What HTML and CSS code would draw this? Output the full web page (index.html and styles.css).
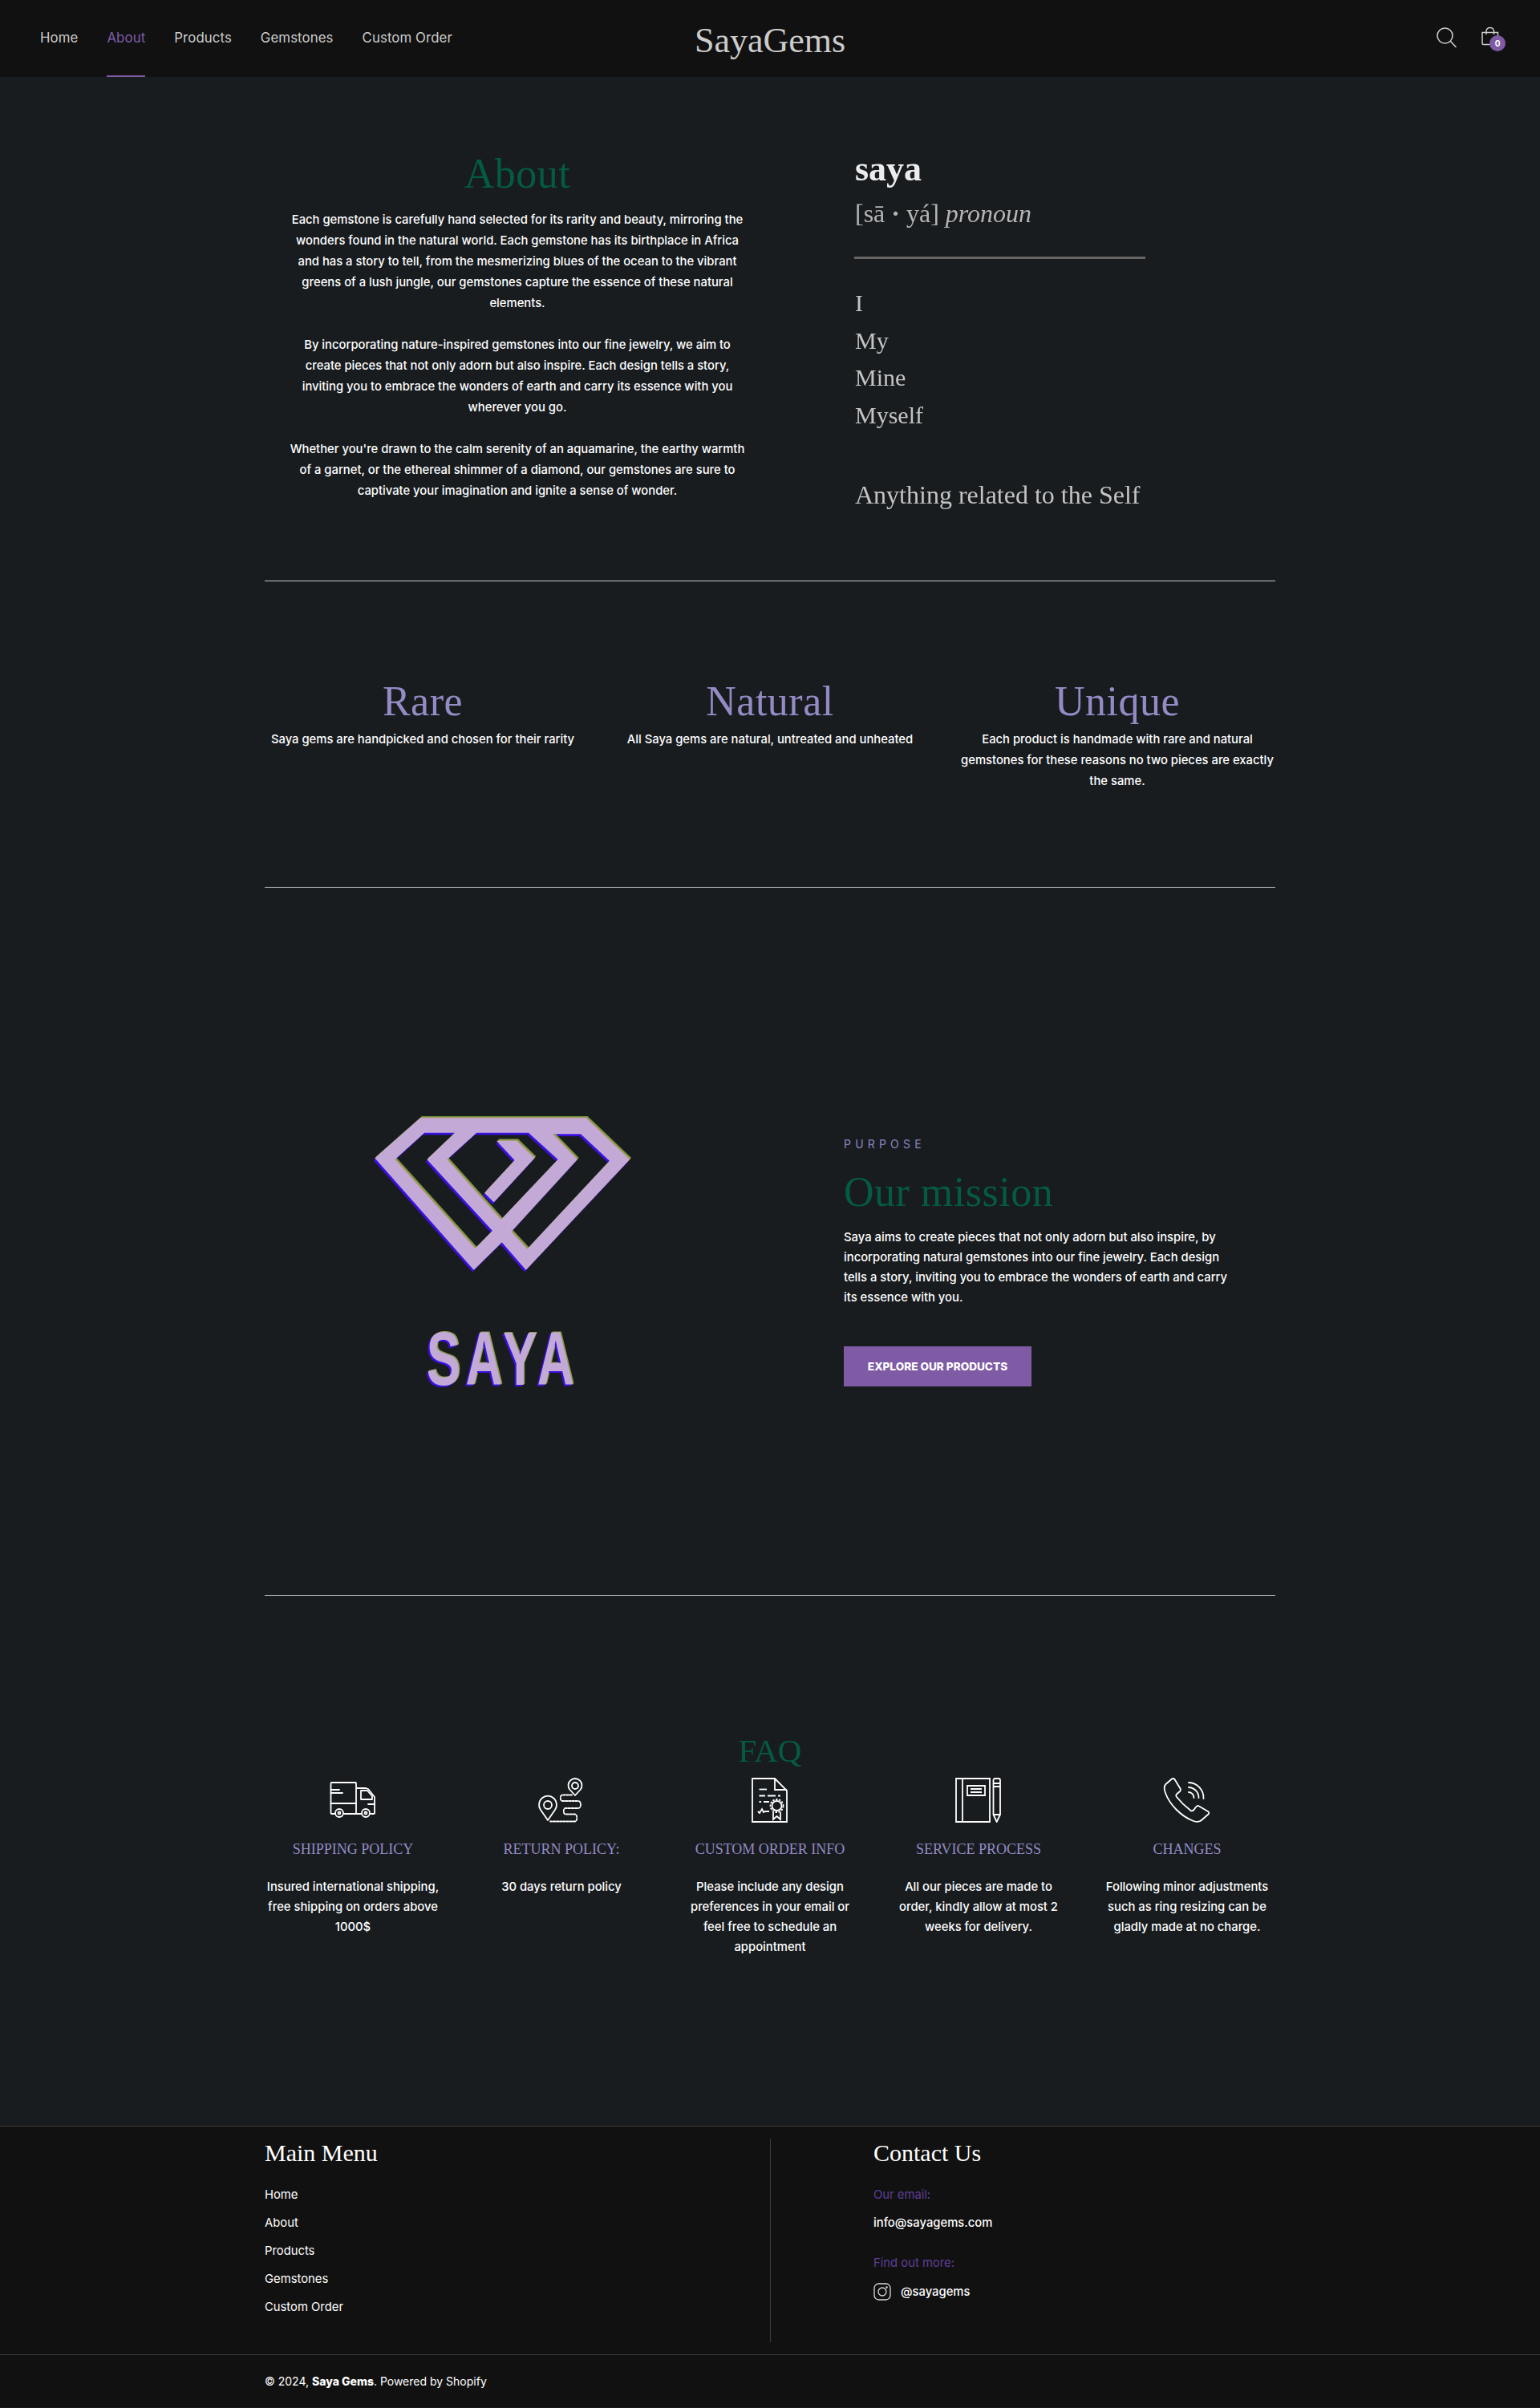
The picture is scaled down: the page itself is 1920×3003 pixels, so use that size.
FILE: index.html
```html
<!DOCTYPE html>
<html lang="en">
<head>
<meta charset="utf-8">
<title>About - SayaGems</title>
<link rel="stylesheet" href="styles.css">
</head>
<body>
<header class="site-header">
  <nav class="nav">
    <a href="#">Home</a>
    <a href="#" class="active">About</a>
    <a href="#">Products</a>
    <a href="#">Gemstones</a>
    <a href="#">Custom Order</a>
  </nav>
  <a href="#" class="brand">SayaGems</a>
  <div class="tools">
    <svg class="ico-search" width="28" height="28" viewBox="0 0 28 28" fill="none" stroke="#ccc" stroke-width="1.6"><circle cx="11.5" cy="11.5" r="9.5"/><path d="M18.5 18.5l7 7.5"/></svg>
    <div class="cart">
      <svg width="24" height="24" viewBox="0 0 24 24" fill="none" stroke="#ccc" stroke-width="1.5"><path d="M2 7.500h19.500v13.500a1.500 1.500 0 0 1-1.500 1.500H3.500A1.500 1.500 0 0 1 2 21z"/><path d="M7 10V5.500a4.800 4.800 0 0 1 9.500 0V10"/></svg>
      <span class="badge">0</span>
    </div>
  </div>
</header>

<main class="wrap">
  <section class="about">
    <div class="about-left">
      <h1 class="h-green h-large">About</h1>
      <p>Each gemstone is carefully hand selected for its rarity and beauty, mirroring the<br>wonders found in the natural world. Each gemstone has its birthplace in Africa<br>and has a story to tell, from the mesmerizing blues of the ocean to the vibrant<br>greens of a lush jungle, our gemstones capture the essence of these natural<br>elements.</p>
      <p>By incorporating nature-inspired gemstones into our fine jewelry, we aim to<br>create pieces that not only adorn but also inspire. Each design tells a story,<br>inviting you to embrace the wonders of earth and carry its essence with you<br>wherever you go.</p>
      <p>Whether you're drawn to the calm serenity of an aquamarine, the earthy warmth<br>of a garnet, or the ethereal shimmer of a diamond, our gemstones are sure to<br>captivate your imagination and ignite a sense of wonder.</p>
    </div>
    <div class="about-right">
      <div class="def-word">saya</div>
      <div class="def-pron">[sā <b>·</b> yá] <em>pronoun</em></div>
      <div class="def-rule"></div>
      <ul class="def-list"><li>I</li><li>My</li><li>Mine</li><li>Myself</li></ul>
      <div class="def-note">Anything related to the Self</div>
    </div>
  </section>

  <section class="traits">
    <div class="trait"><h2 class="h-purple h-large">Rare</h2><p>Saya gems are handpicked and chosen for their rarity</p></div>
    <div class="trait"><h2 class="h-purple h-large">Natural</h2><p>All Saya gems are natural, untreated and unheated</p></div>
    <div class="trait"><h2 class="h-purple h-large">Unique</h2><p>Each product is handmade with rare and natural<br>gemstones for these reasons no two pieces are exactly<br>the same.</p></div>
  </section>

  <section class="mission">
    <div class="mission-logo">
      <svg class="gem" width="340" height="230" viewBox="0 0 1020 690">
        <defs>
          <path id="gemshape" fill-rule="evenodd" d="M195 40H815L978 195 590 608 500 505 395 608 25 190ZM210 95H325L220 195 465 462 400 528 100 195ZM405 95H600L710 195 497 420 295 195ZM690 100H795L903 200 595 530 535 465 782 195ZM480 125H555L622 190 470 355 435 320 548 198Z"/>
        </defs>
        <use href="#gemshape" class="gem-blue" x="-5" y="8"/>
        <use href="#gemshape" class="gem-green" x="6" y="-7"/>
        <use href="#gemshape" class="gem-orange" x="3" y="-3"/>
        <use href="#gemshape" class="gem-main"/>
      </svg>
      <div class="saya-mark">SAYA</div>
    </div>
    <div class="mission-text">
      <div class="eyebrow">PURPOSE</div>
      <h2 class="h-green h-large">Our mission</h2>
      <p>Saya aims to create pieces that not only adorn but also inspire, by<br>incorporating natural gemstones into our fine jewelry. Each design<br>tells a story, inviting you to embrace the wonders of earth and carry<br>its essence with you.</p>
      <a href="#" class="btn">EXPLORE OUR PRODUCTS</a>
    </div>
  </section>

  <section class="faq">
    <h2 class="faq-title">FAQ</h2>
    <div class="faq-grid">
      <div class="faq-item">
        <svg class="ico" viewBox="0 0 60 56" fill="none" stroke="#fff" stroke-width="1.800" stroke-linejoin="round" stroke-linecap="round">
          <path d="M8 45H3.500a1 1 0 0 1-1-1V7a1 1 0 0 1 1-1H33a1 1 0 0 1 1 1v38H19M34 13h12l3 1 8 10v20a1 1 0 0 1-1 1h-4M41 45h-7"/>
          <path d="M2.500 32H34M2.500 15H13M2.500 19H17M40 16h8l6 7v4H40zM49 33h8"/>
          <circle cx="13" cy="44" r="5"/><circle cx="13" cy="44" r="1.500"/><circle cx="46" cy="44" r="5"/><circle cx="46" cy="44" r="1.500"/>
        </svg>
        <h3>SHIPPING POLICY</h3>
        <p>Insured international shipping,<br>free shipping on orders above<br>1000$</p>
      </div>
      <div class="faq-item">
        <svg class="ico" viewBox="0 0 60 56" fill="none" stroke="#fff" stroke-width="1.800" stroke-linejoin="round">
          <path d="M13 53 4 40a11 11 0 1 1 18 0z"/><circle cx="13" cy="34" r="5"/>
          <path d="M47 22l-6.500-7a8.500 8.500 0 1 1 13 0z"/><circle cx="47" cy="10" r="4"/>
          <path stroke-dasharray="2.600 1.600" stroke-linecap="round" d="M43 21.500H31c-3 0-3 7.500 0 7.500H51c4 0 4 9 0 9H35c-3 0-3 7.500 0 7.500H47c3 0 3 9 0 9H16"/>
        </svg>
        <h3>RETURN POLICY:</h3>
        <p>30 days return policy</p>
      </div>
      <div class="faq-item">
        <svg class="ico" viewBox="0 0 60 56" fill="none" stroke="#fff" stroke-width="1.800" stroke-linejoin="miter">
          <path d="M8 1H36L51 16V55H8z"/><path d="M36 1V15H51"/>
          <path d="M16.500 14.500H26"/>
          <path d="M16.500 22.500H24M27 22.500H37M40 22.500H43M16.500 30H19M22 30H29"/>
          <circle cx="38.500" cy="35" r="6"/><circle cx="38.500" cy="35" r="8" stroke-dasharray="2.500 1.500"/>
          <path d="M34 43V52L38.500 48 43 52V43"/>
          <path d="M15 42l2 2 3-5 2 4 2-1h5"/>
        </svg>
        <h3>CUSTOM ORDER INFO</h3>
        <p>Please include any design<br>preferences in your email or<br>feel free to schedule an<br>appointment</p>
      </div>
      <div class="faq-item">
        <svg class="ico" viewBox="0 0 60 56" fill="none" stroke="#fff" stroke-width="1.800">
          <path d="M2 1H44V55H2zM10 1V55"/>
          <path d="M16 10H38V22H16zM20 14H34M20 18H34"/>
          <path d="M48.500 45V3a2 2 0 0 1 2-2h4.500a2 2 0 0 1 2 2V46l-4.300 9-4.200-9zM48.500 7H57M48.500 11H57M48.500 46H57"/>
        </svg>
        <h3>SERVICE PROCESS</h3>
        <p>All our pieces are made to<br>order, kindly allow at most 2<br>weeks for delivery.</p>
      </div>
      <div class="faq-item">
        <svg class="ico" viewBox="0 0 60 56" fill="none" stroke="#fff" stroke-width="1.800" stroke-linejoin="round" stroke-linecap="round">
          <path d="M11 1.500 3.500 8C.5 11 1.500 15 3 19 8 33 22 48 38 54c4 1.500 8 1 10.500-1.500l8-7c1-1 1-2.500-.5-3.500L45 35.500c-1.500-1-3-.5-4 1l-2.500 3.500c-1.500 1.500-3 2-4.500.5C28 36 21 29 17 24c-1-1.500-1-3 .5-4l3.500-3c1-1 1-2.500.5-3.500L14.500 2C13.500 1 12 .8 11 1.500z"/>
          <path d="M32 18a7 7 0 0 1 6.500 7M32 12a13 13 0 0 1 12.500 13M32 6a19 19 0 0 1 18.500 20"/>
        </svg>
        <h3>CHANGES</h3>
        <p>Following minor adjustments<br>such as ring resizing can be<br>gladly made at no charge.</p>
      </div>
    </div>
  </section>
</main>

<footer class="site-footer">
  <div class="footer-main">
    <div class="footer-col">
      <h4>Main Menu</h4>
      <ul class="footer-links">
        <li><a href="#">Home</a></li>
        <li><a href="#">About</a></li>
        <li><a href="#">Products</a></li>
        <li><a href="#">Gemstones</a></li>
        <li><a href="#">Custom Order</a></li>
      </ul>
    </div>
    <div class="footer-col contact">
      <h4>Contact Us</h4>
      <div class="f-label">Our email:</div>
      <div class="f-line">info@sayagems.com</div>
      <div class="f-label second">Find out more:</div>
      <div class="f-insta">
        <svg width="22" height="22" viewBox="0 0 22 22" fill="none" stroke="#ddd" stroke-width="1.300"><rect x="1" y="1" width="20" height="20" rx="5.500"/><circle cx="11" cy="11" r="5"/><circle cx="16.500" cy="5.500" r=".6" fill="#ddd"/></svg>
        <span>@sayagems</span>
      </div>
    </div>
  </div>
  <div class="footer-bar">
    <div class="footer-copy">© 2024, <strong>Saya Gems</strong>. Powered by Shopify</div>
  </div>
</footer>
</body>
</html>
```
FILE: styles.css
```css
* { box-sizing: border-box; }
html, body { margin: 0; padding: 0; }
body {
  background: #181c1f;
  color: #fff;
  font-family: Inter, "Liberation Sans", sans-serif;
  font-size: 14.800px;
  font-weight: 500;
}
a { color: inherit; text-decoration: none; }
h1, h2, h3, h4, p, ul { margin: 0; padding: 0; font-weight: 400; }
p { font-weight: 500; }
ul { list-style: none; }

.site-header {
  height: 96px;
  background: #111;
  position: relative;
  display: flex;
  align-items: center;
  justify-content: space-between;
  padding: 0 48px 0 50px;
}
.nav { display: flex; gap: 36px; height: 96px; }
.nav a {
  color: #ccc;
  font-size: 16.800px;
  font-weight: 400;
  line-height: 94px;
  height: 96px;
  letter-spacing: .1px;
  border-bottom: 2px solid transparent;
}
.nav a.active { color: #7f5ba6; border-bottom-color: #7f5ba6; }
.brand {
  position: absolute;
  left: 0;
  right: 0;
  top: 27px;
  text-align: center;
  font-family: "Liberation Serif", serif;
  font-size: 44px;
  font-weight: 400;
  line-height: 48px;
  color: #ccc;
}
.tools { display: flex; align-items: flex-start; gap: 28px; margin-top: -2px; }
.ico-search { display: block; }
.cart { position: relative; width: 26px; height: 28px; }
.cart svg { display: block; }
.badge {
  position: absolute;
  left: 11px;
  top: 11px;
  width: 20px;
  height: 20px;
  border-radius: 50%;
  background: #7f5ba6;
  color: #fff;
  font-size: 10px;
  font-weight: 700;
  line-height: 20px;
  text-align: center;
}

.wrap { width: 1260px; margin: 0 auto; }
.h-large {
  font-family: "Liberation Serif", serif;
  font-size: 52px;
  line-height: 60px;
  letter-spacing: .5px;
}
.h-green { color: #045a44; }
.h-purple { color: #938bc4; }

.about {
  display: flex;
  padding: 91px 0 83px;
  border-bottom: 1px solid #c9c9c9;
}
.about-left { width: 630px; text-align: center; }
.about-left h1 { margin-bottom: 14px; }
.about-left p { line-height: 26px; margin-bottom: 26px; }
.about-left p:last-child { margin-bottom: 0; }
.about-right {
  padding-left: 106px;
  font-family: "Liberation Serif", serif;
  font-weight: 400;
  color: #c4c4c4;
  filter: blur(.4px);
}
.def-word { font-size: 44px; font-weight: 700; line-height: 48px; color: #ececec; }
.def-pron { font-size: 32px; line-height: 48px; margin-top: 7px; color: #b5b5b5; }
.def-rule { width: 363px; height: 3px; background: #666; margin: 30px 0 32px -1px; }
.def-list li { font-size: 30px; line-height: 46.700px; }
.def-note { font-size: 32px; line-height: 48px; margin-top: 51px; white-space: nowrap; }

.traits {
  display: grid;
  grid-template-columns: repeat(3, 394px);
  column-gap: 39px;
  padding: 120px 0;
  border-bottom: 1px solid #c9c9c9;
  height: 382px;
}
.trait { text-align: center; }
.trait h2 { margin-bottom: 4px; }
.trait p { line-height: 26px; }

.mission {
  display: grid;
  grid-template-columns: 594px 1fr;
  column-gap: 128px;
  padding: 0;
  height: 883px;
  border-bottom: 1px solid #c9c9c9;
}
.mission-logo {
  padding-top: 274px;
  display: flex;
  flex-direction: column;
  align-items: center;
}
.gem { display: block; margin-left: 3px; }
.gem-main { fill: #c2a9d6; }
.gem-blue { fill: #3a10e0; }
.gem-green { fill: #6e9a3c; }
.gem-orange { fill: #b89268; }
.saya-mark {
  margin-top: 42px;
  font-family: "Liberation Sans", sans-serif;
  font-size: 94px;
  font-weight: 700;
  line-height: 84px;
  letter-spacing: 9px;
  color: #c2a9d6;
  text-shadow: -3px 2px 0 #3a10e0, 2px -1px 0 #8a9a4c;
  transform: scaleX(.68);
}
.mission-text { padding-top: 310px; }
.eyebrow {
  color: #8e86c0;
  font-size: 14px;
  font-weight: 400;
  line-height: 20px;
  letter-spacing: 5.200px;
  margin-bottom: 20px;
}
.mission-text p { line-height: 25px; margin-top: 14px; }
.btn {
  display: inline-block;
  margin-top: 48px;
  width: 234px;
  height: 50px;
  line-height: 50px;
  text-align: center;
  background: #7f5ba6;
  color: #fff;
  font-size: 13.600px;
  font-weight: 800;
}

.faq { padding: 168px 0 210px; }
.faq-title {
  font-family: "Liberation Serif", serif;
  font-size: 41px;
  line-height: 50px;
  color: #045a44;
  text-align: center;
  margin-bottom: 9px;
}
.faq-grid {
  display: grid;
  grid-template-columns: repeat(5, 220px);
  column-gap: 40px;
}
.faq-item { text-align: center; }
.ico { display: block; width: 60px; height: 56px; margin: 0 auto 18px; }
.faq-item h3 {
  font-family: "Liberation Serif", serif;
  font-size: 18px;
  line-height: 30px;
  color: #938bc4;
  margin-bottom: 20px;
}
.faq-item p { line-height: 25px; }

.site-footer { background: #111; border-top: 1px solid #3c3c3c; }
.footer-main {
  width: 1260px;
  margin: 0 auto;
  padding: 15px 0;
  display: grid;
  grid-template-columns: 630px 630px;
  height: 284px;
}
.footer-col h4 {
  font-family: "Liberation Serif", serif;
  font-size: 30px;
  line-height: 36px;
  margin-bottom: 17px;
}
.footer-links li { line-height: 35px; }
.contact { border-left: 1px solid #3c3c3c; padding-left: 128px; }
.f-label { color: #5f3f96; line-height: 35px; font-weight: 400; }
.f-label.second { margin-top: 15px; }
.f-line { line-height: 35px; }
.f-insta { display: flex; align-items: center; gap: 12px; height: 37px; }
.f-insta svg { display: block; }
.footer-bar { border-top: 1px solid #3c3c3c; height: 66px; }
.footer-copy {
  width: 1260px;
  margin: 0 auto;
  line-height: 65px;
  font-size: 14px;
  font-weight: 400;
}
.footer-copy strong { font-weight: 800; }
```
